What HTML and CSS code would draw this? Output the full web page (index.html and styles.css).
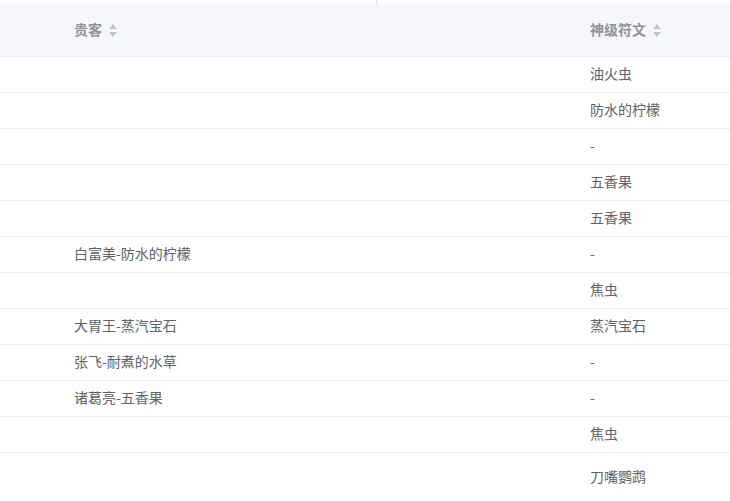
FILE: index.html
```html
<!DOCTYPE html>
<html lang="zh-CN">
<head>
    <meta charset="UTF-8">
    <meta name="viewport" content="width=device-width, initial-scale=1.0">
    <title>贵客列表</title>
    <link rel="stylesheet" href="styles.css">
</head>
<body>
<div class="top-strip"><span class="col-resize"></span></div>
<div class="table">
    <div class="row head">
        <div class="cell"></div>
        <div class="cell">贵客<span class="caret"><i class="up"></i><i class="down"></i></span></div>
        <div class="cell">神级符文<span class="caret"><i class="up"></i><i class="down"></i></span></div>
    </div>
    <div class="row"><div class="cell"></div><div class="cell"></div><div class="cell">油火虫</div></div>
    <div class="row"><div class="cell"></div><div class="cell"></div><div class="cell">防水的柠檬</div></div>
    <div class="row"><div class="cell"></div><div class="cell"></div><div class="cell">-</div></div>
    <div class="row"><div class="cell"></div><div class="cell"></div><div class="cell">五香果</div></div>
    <div class="row"><div class="cell"></div><div class="cell"></div><div class="cell">五香果</div></div>
    <div class="row"><div class="cell"></div><div class="cell">白富美-防水的柠檬</div><div class="cell">-</div></div>
    <div class="row"><div class="cell"></div><div class="cell"></div><div class="cell">焦虫</div></div>
    <div class="row"><div class="cell"></div><div class="cell">大胃王-蒸汽宝石</div><div class="cell">蒸汽宝石</div></div>
    <div class="row"><div class="cell"></div><div class="cell">张飞-耐煮的水草</div><div class="cell">-</div></div>
    <div class="row"><div class="cell"></div><div class="cell">诸葛亮-五香果</div><div class="cell">-</div></div>
    <div class="row"><div class="cell"></div><div class="cell"></div><div class="cell">焦虫</div></div>
    <div class="row last"><div class="cell"></div><div class="cell"></div><div class="cell">刀嘴鹦鹉</div></div>
</div>
</body>
</html>
```
FILE: styles.css
```css
body {
    margin: 0;
    font-family: "Noto Sans CJK SC", "Microsoft YaHei", sans-serif;
    font-size: 14px;
    color: #606266;
    background: #fff;
    overflow: hidden;
}

.top-strip {
    height: 4px;
    position: relative;
}

.col-resize {
    position: absolute;
    left: 376px;
    top: 0;
    width: 1px;
    height: 4px;
    background: #dcdfe6;
}

.table {
    width: 730px;
}

.row {
    display: grid;
    grid-template-columns: 64px 516px 150px;
    height: 35px;
    border-bottom: 1px solid #ebeef5;
    align-items: center;
}

.row.head {
    height: 52px;
    background: #f5f7fa;
    color: #909399;
    font-weight: bold;
}

.row.last {
    height: 48px;
    border-bottom: none;
}

.cell {
    padding: 0 10px 3px;
    line-height: 20px;
    white-space: nowrap;
}

.head .cell {
    padding-bottom: 2px;
}

.caret {
    display: inline-flex;
    flex-direction: column;
    align-items: center;
    vertical-align: middle;
    margin-left: 6px;
    height: 13px;
    width: 10px;
    justify-content: space-between;
    position: relative;
    top: -1px;
}

.caret i {
    width: 0;
    height: 0;
    border-left: 4px solid transparent;
    border-right: 4px solid transparent;
}

.caret .up {
    border-bottom: 5px solid #c0c4cc;
}

.caret .down {
    border-top: 5px solid #c0c4cc;
}
```
